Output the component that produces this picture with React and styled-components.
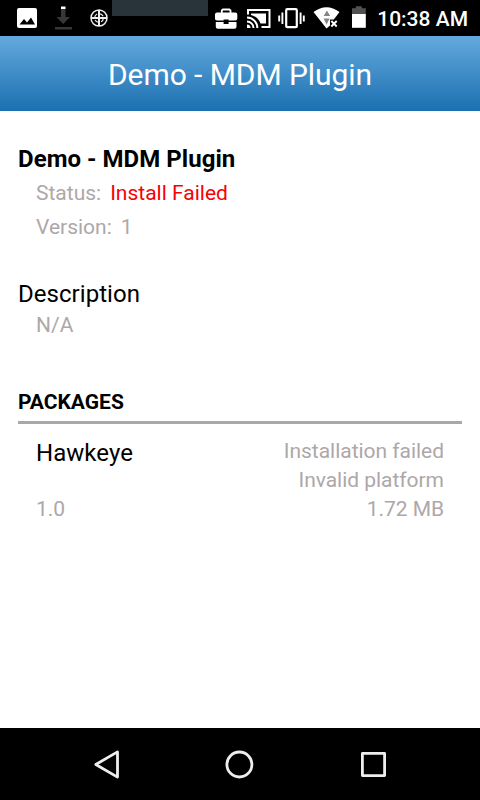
import React from "react";
import styled, { createGlobalStyle } from "styled-components";

const GlobalStyle = createGlobalStyle`
  * { box-sizing: border-box; }
  body {
    margin: 0;
    background: #fff;
    font-family: Roboto, "Liberation Sans", sans-serif;
  }
`;

// Layout //////////////////////////////////////////////////////////

const Screen = styled.div`
  display: flex;
  flex-direction: column;
  width: 480px;
  height: 800px;
  background: #fff;
`;

const StatusBar = styled.div`
  display: flex;
  flex: none;
  height: 36px;
  background: #000;
`;

const StatusIcon = styled.svg`
  flex: none;
  display: block;
  width: ${(p) => p.$width}px;
  height: 36px;
`;

const Ticker = styled.div`
  width: 96px;
  height: 16px;
  margin-right: 4px;
  background: #29343a;
`;

const Clock = styled.div`
  flex: 1;
  padding-right: 12px;
  color: #fff;
  font-size: 21px;
  font-weight: 500;
  line-height: 38px;
  text-align: right;
  white-space: nowrap;
`;

const Header = styled.header`
  flex: none;
  height: 75px;
  padding-top: 1px;
  background: linear-gradient(#64a9de, #1b70b0);
  color: #fff;
  font-size: 30px;
  letter-spacing: -0.07px;
  line-height: 76px;
  text-align: center;
`;

const Content = styled.main`
  flex: 1;
  padding: 31px 18px 0;
`;

const Section = styled.section`
  margin-bottom: ${(p) => p.$gap || 0}px;
`;

const Title = styled.h2`
  margin: 0;
  color: #000;
  font-size: 24px;
  font-weight: ${(p) => (p.$bold ? 700 : 400)};
  letter-spacing: 0.04px;
  line-height: ${(p) => p.$height || 34}px;
`;

const Field = styled.div`
  display: flex;
  gap: 9px;
  padding-left: 18px;
  color: #aea7a8;
  font-size: 21px;
  line-height: ${(p) => p.$height || 34}px;
`;

const ErrorText = styled.span`
  color: #f80004;
`;

const ListTitle = styled.h3`
  margin: 0;
  padding: 1px 0 3px;
  border-bottom: 3px solid #aca6a8;
  color: #000;
  font-size: 21px;
  font-weight: 700;
  line-height: 31px;
`;

const PackageRow = styled.div`
  display: flex;
  justify-content: space-between;
  padding: 13px 18px 0;
`;

const Column = styled.div`
  display: flex;
  flex-direction: column;
  justify-content: space-between;
  text-align: ${(p) => p.$align || "left"};
`;

const Detail = styled.div`
  color: #aea7a8;
  font-size: 21px;
  letter-spacing: -0.03px;
  line-height: 29px;
`;

const NavBar = styled.nav`
  display: flex;
  flex: none;
  justify-content: center;
  align-items: center;
  gap: 98px;
  height: 72px;
  background: #000;
`;

const NavIcon = styled.svg`
  display: block;
  width: 36px;
  height: 36px;
  fill: none;
  stroke: #eee;
  stroke-width: 2.8;
  stroke-linejoin: round;
`;

// Status bar icons //////////////////////////////////////////////////////////

const ImageIcon = () => (
  <StatusIcon $width={45} viewBox="0 0 45 36">
    <rect x="17" y="8" width="20" height="20" rx="2" fill="#fff" />
    <path d="M19.5 24.5l4.5-5.5 3 3.5 4-5 4 7z" fill="#000" />
  </StatusIcon>
);

const DownloadIcon = () => (
  <StatusIcon $width={36} viewBox="0 0 36 36">
    <path d="M16 9h4.500v8h4.500l-6.800 7-6.800-7h4.600z" fill="#373737" />
    <rect x="16" y="6.500" width="4.500" height="2.500" fill="#fff" />
    <rect x="10" y="27" width="17" height="2.500" fill="#373737" />
  </StatusIcon>
);

const GlobeIcon = () => (
  <StatusIcon $width={31} viewBox="0 0 31 36">
    <g fill="none" stroke="#eee">
      <circle cx="18" cy="18" r="8" strokeWidth="1.500" />
      <circle cx="18" cy="18" r="4.400" strokeWidth="1.200" strokeDasharray="4.500 2.400" />
      <path d="M18 10v16M10 18h16" strokeWidth="2" />
    </g>
  </StatusIcon>
);

const BriefcaseIcon = () => (
  <StatusIcon $width={30} viewBox="0 0 30 36">
    <path d="M9.800 13v-2.500l1.200-1h6.300l1.200 1v2.500" fill="none" stroke="#fff" strokeWidth="1.800" />
    <path d="M5 12.500h18.300q2 0 2 2v4.300q0 1.700-2 1.700h-6.700v-1h-5v1h-6.600q-2 0-2-1.700v-4.300q0-2 2-2z" fill="#fff" />
    <path d="M3.800 22h7.800v2h5v-2h7.900v4.800q0 2-2 2h-16.700q-2 0-2-2z" fill="#fff" />
  </StatusIcon>
);

const CastIcon = () => (
  <StatusIcon $width={36} viewBox="0 0 36 36">
    <g fill="none" stroke="#fff" strokeWidth="2">
      <path d="M6 14.500v-4.500h21.500v17h-8" />
      <path d="M5 17.500a10.300 10.300 0 0 1 10.300 10.500M5 21.500a6.500 6.500 0 0 1 6.500 6.500" />
      <path d="M9 13.500h15v10h-5.500a13.500 13.500 0 0 0-9.500-8.500z" fill="#fff" stroke="none" />
    </g>
    <path d="M5 24.500a3.500 3.500 0 0 1 3.500 3.500h-3.500z" fill="#fff" />
  </StatusIcon>
);

const VibrateIcon = () => (
  <StatusIcon $width={34} viewBox="0 0 34 36">
    <rect x="8.200" y="9.200" width="10.600" height="18" rx="1" fill="none" stroke="#fff" strokeWidth="2.200" />
    <path d="M4.400 12.500v11.500M1.200 15.500v6M22.600 12.500v11.500M25.800 15.500v6" stroke="#fff" strokeWidth="1.900" />
  </StatusIcon>
);

const WifiIcon = () => (
  <StatusIcon $width={34} viewBox="0 0 34 36">
    <path d="M1.500 12q13-9.500 26 0l-5.700 7.500h-3.800v6l-3.500 3z" fill="#fff" />
    <path d="M14.900 10.500l3.300 5.500h-6.600zM11.600 18.500h6l-3 6z" fill="#858585" />
    <path d="M19.300 21l5.400 5.500M24.700 21l-5.400 5.500" stroke="#fff" strokeWidth="1.900" />
  </StatusIcon>
);

const BatteryIcon = () => (
  <StatusIcon $width={26} viewBox="0 0 26 36">
    <path d="M6 8.300h3.800v-2h6v2h4v6h-13.800z" fill="#515151" />
    <rect x="6" y="14" width="13.800" height="13.800" fill="#fff" />
  </StatusIcon>
);

const App = () => (
  <>
    <GlobalStyle />
    <Screen>
      <StatusBar>
        <ImageIcon />
        <DownloadIcon />
        <GlobeIcon />
        <Ticker />
        <BriefcaseIcon />
        <CastIcon />
        <VibrateIcon />
        <WifiIcon />
        <BatteryIcon />
        <Clock>10:38 AM</Clock>
      </StatusBar>

      <Header>Demo - MDM Plugin</Header>

      <Content>
        <Section $gap={33}>
          <Title $bold>Demo - MDM Plugin</Title>
          <Field>
            <span>Status:</span>
            <ErrorText>Install Failed</ErrorText>
          </Field>
          <Field>
            <span>Version:</span>
            <span>1</span>
          </Field>
        </Section>

        <Section $gap={47}>
          <Title>Description</Title>
          <Field $height={28}>N/A</Field>
        </Section>

        <Section>
          <ListTitle>PACKAGES</ListTitle>
          <PackageRow>
            <Column>
              <Title as="div" $height={32}>Hawkeye</Title>
              <Detail>1.0</Detail>
            </Column>
            <Column $align="right">
              <Detail>Installation failed</Detail>
              <Detail>Invalid platform</Detail>
              <Detail>1.72 MB</Detail>
            </Column>
          </PackageRow>
        </Section>
      </Content>

      <NavBar>
        <NavIcon viewBox="0 0 36 36">
          <path d="M7.800 18.500l21.700-12.600v25.200z" />
        </NavIcon>
        <NavIcon viewBox="0 0 36 36">
          <circle cx="17.400" cy="18.500" r="12.500" />
        </NavIcon>
        <NavIcon viewBox="0 0 36 36">
          <rect x="6.400" y="7.400" width="22.200" height="22.200" />
        </NavIcon>
      </NavBar>
    </Screen>
  </>
);

export default App;
